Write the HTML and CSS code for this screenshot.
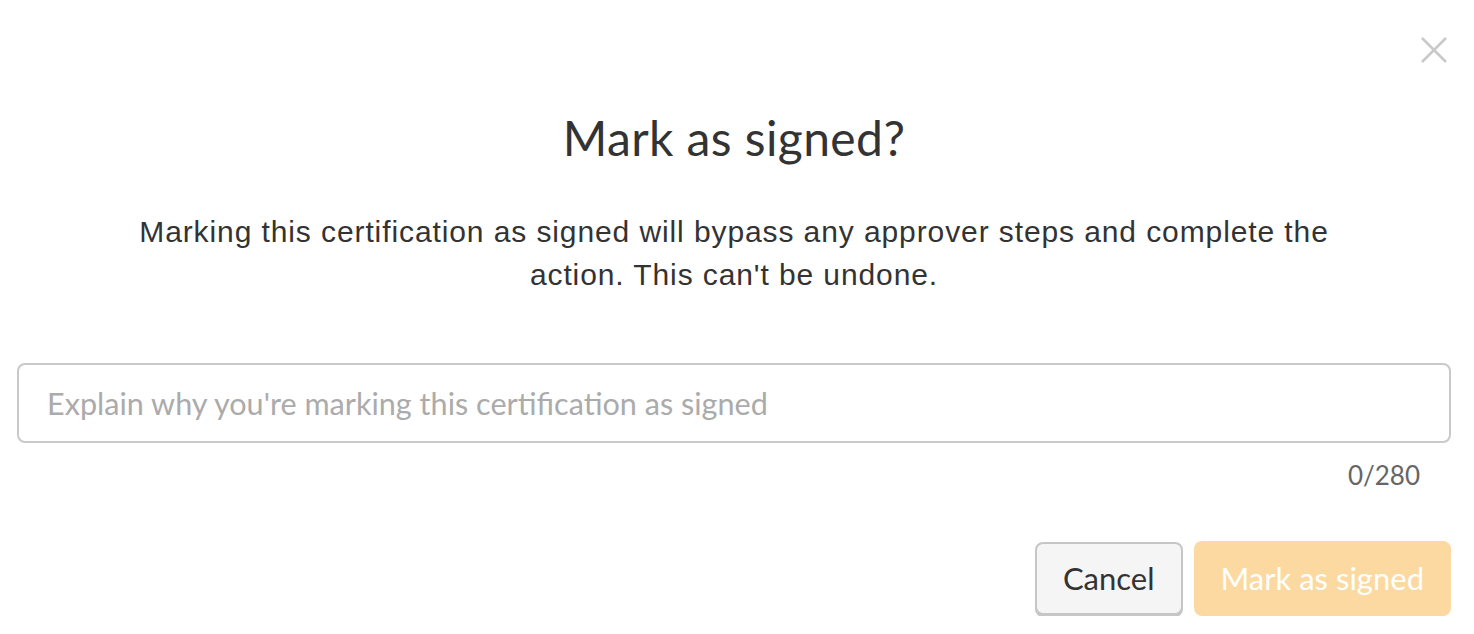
FILE: index.html
```html
<!DOCTYPE html>
<html lang="en">
<head>
<meta charset="utf-8">
<title>Mark as signed?</title>
<link rel="stylesheet" href="styles.css">
</head>
<body>
<div class="dialog">
  <button class="close" aria-label="Close">
    <svg width="26" height="26" viewBox="0 0 26 26"><path d="M1 1L25 25M25 1L1 25" stroke="#c9c9c9" stroke-width="2.6" fill="none"/></svg>
  </button>
  <h1 class="title">Mark as signed?</h1>
  <p class="message">Marking this certification as signed will bypass any approver steps and complete the action. This can't be undone.</p>
  <input class="reason" type="text" placeholder="Explain why you're marking this certification as signed">
  <div class="counter">0/280</div>
  <div class="actions">
    <button class="btn btn-cancel">Cancel</button>
    <button class="btn btn-primary">Mark as signed</button>
  </div>
</div>
</body>
</html>
```

FILE: styles.css
```css
html, body {
  margin: 0;
  padding: 0;
  background: #ffffff;
}

.dialog {
  position: relative;
  display: flex;
  flex-direction: column;
  align-items: stretch;
  padding: 110px 23px 0 17px;
  font-family: Lato, "Liberation Sans", sans-serif;
  color: #333333;
}

.close {
  position: absolute;
  top: 37px;
  right: 27px;
  width: 26px;
  height: 26px;
  padding: 0;
  border: 0;
  background: transparent;
  display: flex;
}

.title {
  margin: 0;
  text-align: center;
  font-family: Lato, sans-serif;
  font-weight: 400;
  font-size: 48px;
  letter-spacing: 0.4px;
  line-height: 56px;
  color: #333333;
}

.message {
  margin: 44px auto 0;
  max-width: 1230px;
  text-align: center;
  font-family: "Liberation Sans", Arial, sans-serif;
  font-size: 30px;
  letter-spacing: 0.9px;
  line-height: 43px;
  color: #333333;
}

.reason {
  margin-top: 67px;
  box-sizing: border-box;
  height: 80px;
  border: 2px solid #c9c9c9;
  border-radius: 8px;
  padding: 1px 28px 0;
  font-family: Lato, sans-serif;
  font-size: 30.6px;
  color: #333333;
  outline: none;
  background: #ffffff;
}

.reason::placeholder {
  color: #ababab;
}

.counter {
  margin-top: 17px;
  padding-right: 31px;
  text-align: right;
  font-family: Lato, sans-serif;
  font-size: 26px;
  line-height: 30px;
  color: #666666;
}

.actions {
  margin-top: 51px;
  display: flex;
  justify-content: flex-end;
  align-items: flex-start;
  gap: 11px;
}

.btn {
  box-sizing: border-box;
  font-family: Lato, sans-serif;
  font-size: 31px;
  line-height: 1;
  border-radius: 8px;
  cursor: pointer;
}

.btn-cancel {
  height: 73px;
  margin-top: 1px;
  padding: 0 26px;
  background: #f5f5f5;
  border: 2px solid #c6c6c6;
  box-shadow: 0 2px 0 #c6c6c6;
  color: #333333;
}

.btn-primary {
  height: 75px;
  padding: 0 27px;
  background: #fcd9a0;
  border: 0;
  color: #ffffff;
}
```
